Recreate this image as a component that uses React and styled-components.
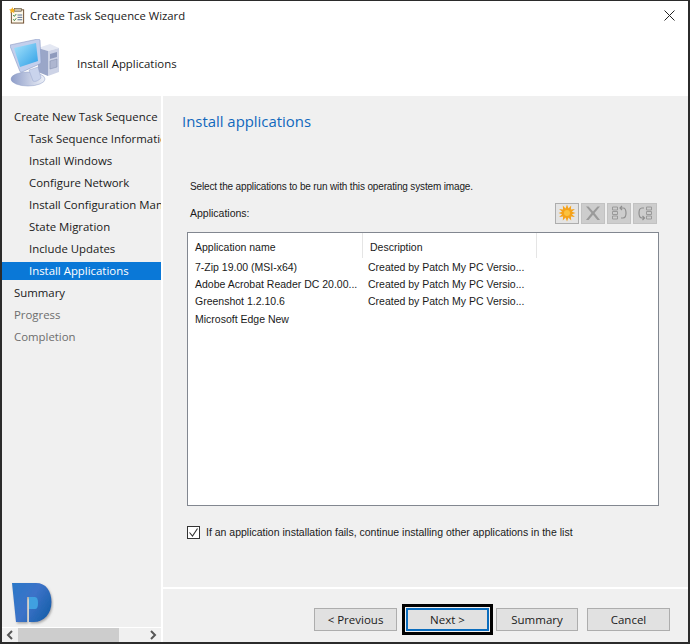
import styled, { createGlobalStyle } from "styled-components"

const GlobalStyle = createGlobalStyle`
    html, body {
        margin: 0;
        padding: 0;
        background: #fff;
    }
    * {
        box-sizing: border-box;
    }
`
const Win = styled.div`
    width: 690px;
    height: 644px;
    display: flex;
    flex-direction: column;
    background: #fff;
    border: solid #2b2b2b;
    border-width: 1px 2px 2px 2px;
    font-family: "Open Sans", "Noto Sans", sans-serif;
    color: #1a1a1a;
    overflow: hidden;
`
const TitleBar = styled.div`
    height: 31px;
    flex: none;
    display: flex;
    align-items: center;
    padding: 0 13px 2px 7px;
    gap: 4px;
    font-size: 11.3px;
`
const TitleText = styled.span`
    flex: 1;
`
const Banner = styled.div`
    height: 64px;
    flex: none;
    display: flex;
    align-items: center;
    padding: 0 0 2px 8px;
    gap: 17px;
    font-size: 11.4px;
`
const Body = styled.div`
    flex: 1;
    min-height: 0;
    display: flex;
    gap: 2px;
`
const Sidebar = styled.aside`
    width: 159px;
    flex: none;
    display: flex;
    flex-direction: column;
    background: #f0f0f0;
`
const Steps = styled.ul`
    list-style: none;
    margin: 0;
    padding: 12px 0 0;
    flex: 1;
    overflow: hidden;
`
const Step = styled.li`
    height: 18px;
    line-height: 17px;
    margin-bottom: 4px;
    font-size: 11.4px;
    white-space: nowrap;
    overflow: hidden;
    padding-left: ${(p) => (p.$sub ? "27px" : "12px")};
    color: ${(p) => (p.$active ? "#fff" : p.$muted ? "#6d6d6d" : "#1a1a1a")};
    background: ${(p) => (p.$active ? "#0a78d7" : "transparent")};
`
const LogoWrap = styled.div`
    height: 46px;
    padding: 1px 0 0 8px;
    flex: none;
`
const Scrollbar = styled.div`
    height: 15px;
    flex: none;
    display: flex;
    align-items: center;
    justify-content: space-between;
    border-top: 1px solid #fff;
    background: #f0f0f0;
    padding: 0 4px 0 4px;
    position: relative;
`
const Thumb = styled.div`
    position: absolute;
    left: 16px;
    top: 0;
    width: 101px;
    height: 14px;
    background: #cdcdcd;
`
const Main = styled.main`
    flex: 1;
    min-width: 0;
    display: flex;
    flex-direction: column;
    background: #f0f0f0;
`
const Content = styled.div`
    height: 493px;
    flex: none;
    padding: 14px 29px 0 19px;
    border-bottom: 2px solid #fff;
    display: flex;
    flex-direction: column;
`
const Heading = styled.h1`
    margin: 0;
    font-size: 14.9px;
    line-height: 22px;
    font-weight: 400;
    color: #1168bd;
`
const Inner = styled.div`
    flex: 1;
    display: flex;
    flex-direction: column;
    padding: 0 0 0 5px;
    font-family: "Liberation Sans", Arial, sans-serif;
    font-size: 10.5px;
`
const Prompt = styled.p`
    margin: 48px 0 0 3px;
    line-height: 14px;
    font-size: 10px;
    letter-spacing: -0.15px;
`
const ToolRow = styled.div`
    display: flex;
    align-items: center;
    justify-content: space-between;
    height: 22px;
    margin-top: 8px;
    padding-left: 3px;
`
const Tools = styled.div`
    display: flex;
    gap: 2px;
    margin-right: 2px;
`
const ToolBtn = styled.div`
    width: 24px;
    height: 21px;
    display: flex;
    align-items: center;
    justify-content: center;
    background: ${(p) => (p.$on ? "#e4e4e4" : "#cdcdcd")};
    border: 1px solid ${(p) => (p.$on ? "#adadad" : "#c2c2c2")};
`
const List = styled.div`
    margin-top: 8px;
    height: 274px;
    background: #fff;
    border: 1px solid #828790;
`
const Row = styled.div`
    display: grid;
    grid-template-columns: 175px 174px;
    height: ${(p) => (p.$head ? "25px" : "17.3px")};
    align-items: center;
`
const HeadCell = styled.div`
    height: 100%;
    display: flex;
    align-items: center;
    padding: 2px 0 0 7px;
    border-right: 1px solid #e5e5e5;
`
const Cell = styled.div`
    padding-left: ${(p) => (p.$desc ? "5px" : "7px")};
    white-space: nowrap;
    overflow: hidden;
`
const CheckRow = styled.label`
    display: flex;
    align-items: center;
    gap: 6px;
    margin-top: 19px;
    height: 14px;
`
const CheckBox = styled.span`
    width: 13px;
    height: 13px;
    background: #fff;
    border: 1px solid #333;
    display: flex;
    align-items: center;
    justify-content: center;
`
const Footer = styled.footer`
    flex: 1;
    display: flex;
    justify-content: flex-end;
    gap: 9px;
    padding: 19px 18px 0 0;
`
const Btn = styled.button`
    width: ${(p) => p.$w || "82px"};
    height: 23px;
    padding: 0;
    font-family: "Open Sans", "Noto Sans", sans-serif;
    font-size: 11.5px;
    color: #1a1a1a;
    background: #e1e1e1;
    border: 1px solid #adadad;
    ${(p) => p.$focus && `
        border: 2px solid #0a6cbd;
        outline: 3px solid #000;
        outline-offset: 1px;
        margin-right: -2px;
    `}
`

function WizardIcon() {
    return (
        <svg width="17" height="17" viewBox="0 0 18 18">
            <rect x="2.5" y="3" width="13" height="14" fill="#fdf8ea" stroke="#6b4a2a" />
            <rect x="6" y="1.5" width="7" height="3" fill="#c9c2b0" stroke="#6b5a40" strokeWidth="0.7" />
            <path d="M4.5 8.5l1.2 1.4L7.6 7.5M4.5 13l1.2 1.4 1.9-2.4" fill="none" stroke="#2a7a3a" strokeWidth="1" />
            <path d="M9 8.5h5M9 11h5M9 13.5h5" stroke="#3a5a8a" strokeWidth="0.9" />
            <path d="M3.5 0l1 2.3 2.5.3-1.9 1.6.6 2.4-2.2-1.3L1.3 6.6l.6-2.4L0 2.6l2.5-.3z" fill="#f5b120" />
        </svg>
    )
}

function ComputerIcon() {
    return (
        <svg width="50" height="48" viewBox="0 0 50 48">
            <defs>
                <linearGradient id="scr" x1="0" y1="0" x2="1" y2="1">
                    <stop offset="0" stopColor="#a8e4fc" />
                    <stop offset="1" stopColor="#2f9fe6" />
                </linearGradient>
                <linearGradient id="base" x1="0" y1="0" x2="1" y2="0">
                    <stop offset="0" stopColor="#8f9ec9" />
                    <stop offset="1" stopColor="#eef1f8" />
                </linearGradient>
            </defs>
            <path d="M28 9l12-4 9 4-11 3z" fill="#e4e8f3" />
            <path d="M28 9l10 3v25l-10-4z" fill="#9aa6c8" />
            <path d="M38 12l11-3v24l-11 4z" fill="#cdd3e6" />
            <path d="M40 15l7-2v5l-7 2z" fill="#8f9bbd" />
            <path d="M40 22l7-2v8l-7 2z" fill="#aeb6d0" stroke="#7f8aab" strokeWidth="0.5" />
            <ellipse cx="18" cy="40" rx="17" ry="7" fill="url(#base)" stroke="#8b9ac4" strokeWidth="0.5" />
            <path d="M19 31l9-3 3 11c-3 3-6 4-8 3z" fill="#c9d3ec" stroke="#8b9ac4" strokeWidth="0.4" />
            <path d="M0 6L28 0c1 0 2 .5 2 1.500L31 23c0 1-.5 1.500-1.500 2L12 33c-1 .4-2 0-2.200-1L0 7z" fill="#c3cfec" stroke="#8b9ac4" strokeWidth="0.6" />
            <path d="M4 9l22-5 2 18-18 6z" fill="url(#scr)" />
        </svg>
    )
}

function Logo() {
    return (
        <svg width="44" height="44" viewBox="0 0 44 44">
            <defs>
                <linearGradient id="lg" x1="0" y1="0" x2="1" y2="0.6">
                    <stop offset="0" stopColor="#2a78c8" />
                    <stop offset="0.55" stopColor="#3c72c8" />
                    <stop offset="1" stopColor="#1c62ae" />
                </linearGradient>
                <filter id="ls" x="-10%" y="-10%" width="130%" height="130%">
                    <feDropShadow dx="1" dy="1.5" stdDeviation="1" floodColor="#777" floodOpacity="0.6" />
                </filter>
            </defs>
            <g transform="translate(2 1)" filter="url(#ls)">
                <path
                    fill="url(#lg)"
                    d="M0 0H24C34 0 39.5 8 39.5 19C39.5 31 32 39 22 39H17V14H15V39H4Z"
                />
                <path d="M17 14H23C25 14 26 16 26 20C26 24 25 26 23 26H17Z" fill="#3fa0e0" />
            </g>
        </svg>
    )
}

function ToolIcon({ kind }) {
    if (kind === "new") {
        return (
            <svg width="18" height="18" viewBox="0 0 18 18">
                <path d="M9 0.5l1.5 4 2.700-3-.3 4 4-.6-3 2.800 3.600 1.300-3.600 1.300 3 2.800-4-.6.3 4-2.700-3-1.500 4-1.500-4-2.700 3 .3-4-4 .6 3-2.800L.5 9 4.100 7.700l-3-2.800 4 .6-.3-4 2.700 3z" fill="#f5a21a" />
                <circle cx="9" cy="9" r="3" fill="#fbc23e" />
            </svg>
        )
    }
    if (kind === "del") {
        return (
            <svg width="18" height="18" viewBox="0 0 18 18">
                <path d="M2 2.500h2.500L9 7.500l4.500-5H16l-5.500 6.500L16 16h-2.600L9 10.800 4.600 16H2l5.500-7z" fill="#9a9a9a" />
            </svg>
        )
    }
    if (kind === "up") {
        return (
            <svg width="18" height="18" viewBox="0 0 18 18">
                <path d="M2.500 3h5v3h-5zM2.500 7.500h5v3h-5zM2.500 12h5v3h-5z" fill="none" stroke="#9a9a9a" />
                <path d="M10.500 4h2.500c2 0 3 2 3 5s-1 5-3 5h-2M12 2l-2 2 2 2" fill="none" stroke="#8f8f8f" strokeWidth="1.200" />
            </svg>
        )
    }
    return (
        <svg width="18" height="18" viewBox="0 0 18 18">
            <path d="M10.500 3h5v3h-5zM10.500 7.500h5v3h-5zM10.500 12h5v3h-5z" fill="none" stroke="#9a9a9a" />
            <path d="M8 4H6C4 4 3 6 3 9s1 5 3 5h2M6.500 12l2 2-2 2" fill="none" stroke="#8f8f8f" strokeWidth="1.200" />
        </svg>
    )
}

const steps = [
    { label: "Create New Task Sequence" },
    { label: "Task Sequence Information", sub: true },
    { label: "Install Windows", sub: true },
    { label: "Configure Network", sub: true },
    { label: "Install Configuration Manager", sub: true },
    { label: "State Migration", sub: true },
    { label: "Include Updates", sub: true },
    { label: "Install Applications", sub: true, active: true },
    { label: "Summary" },
    { label: "Progress", muted: true },
    { label: "Completion", muted: true },
]

const apps = [
    ["7-Zip 19.00 (MSI-x64)", "Created by Patch My PC Versio..."],
    ["Adobe Acrobat Reader DC 20.00...", "Created by Patch My PC Versio..."],
    ["Greenshot 1.2.10.6", "Created by Patch My PC Versio..."],
    ["Microsoft Edge New", ""],
]

function App() {
    return (
        <Win>
            <GlobalStyle />
            <TitleBar>
                <WizardIcon />
                <TitleText>Create Task Sequence Wizard</TitleText>
                <svg width="11" height="11" viewBox="0 0 11 11">
                    <path d="M0.5 0.5l10 10M10.500 0.5l-10 10" stroke="#222" fill="none" />
                </svg>
            </TitleBar>
            <Banner>
                <ComputerIcon />
                <span>Install Applications</span>
            </Banner>
            <Body>
                <Sidebar>
                    <Steps>
                        {steps.map((s) => (
                            <Step key={s.label} $sub={s.sub} $active={s.active} $muted={s.muted}>
                                {s.label}
                            </Step>
                        ))}
                    </Steps>
                    <LogoWrap>
                        <Logo />
                    </LogoWrap>
                    <Scrollbar>
                        <Thumb />
                        <svg width="8" height="10" viewBox="0 0 8 10">
                            <path d="M6 1L2 5l4 4" fill="none" stroke="#555" strokeWidth="2" />
                        </svg>
                        <svg width="8" height="10" viewBox="0 0 8 10">
                            <path d="M2 1l4 4-4 4" fill="none" stroke="#555" strokeWidth="2" />
                        </svg>
                    </Scrollbar>
                </Sidebar>
                <Main>
                    <Content>
                        <Heading>Install applications</Heading>
                        <Inner>
                            <Prompt>Select the applications to be run with this operating system image.</Prompt>
                            <ToolRow>
                                <span>Applications:</span>
                                <Tools>
                                    <ToolBtn $on><ToolIcon kind="new" /></ToolBtn>
                                    <ToolBtn><ToolIcon kind="del" /></ToolBtn>
                                    <ToolBtn><ToolIcon kind="up" /></ToolBtn>
                                    <ToolBtn><ToolIcon kind="down" /></ToolBtn>
                                </Tools>
                            </ToolRow>
                            <List>
                                <Row $head>
                                    <HeadCell>Application name</HeadCell>
                                    <HeadCell>Description</HeadCell>
                                </Row>
                                {apps.map(([name, desc]) => (
                                    <Row key={name}>
                                        <Cell>{name}</Cell>
                                        <Cell $desc>{desc}</Cell>
                                    </Row>
                                ))}
                            </List>
                            <CheckRow>
                                <CheckBox>
                                    <svg width="11" height="11" viewBox="0 0 11 11">
                                        <path d="M1.500 5.500l3 3.500 5-7.500" fill="none" stroke="#333" strokeWidth="1.100" />
                                    </svg>
                                </CheckBox>
                                If an application installation fails, continue installing other applications in the list
                            </CheckRow>
                        </Inner>
                    </Content>
                    <Footer>
                        <Btn $w="83px">&lt; Previous</Btn>
                        <Btn $focus $w="83px">Next &gt;</Btn>
                        <Btn>Summary</Btn>
                        <Btn $w="83px">Cancel</Btn>
                    </Footer>
                </Main>
            </Body>
        </Win>
    )
}

export default App
